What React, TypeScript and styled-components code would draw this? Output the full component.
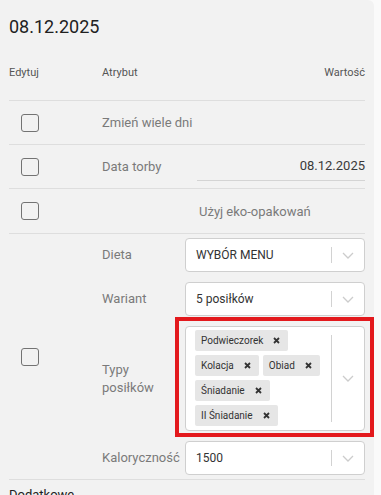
import React, { FC } from 'react';
import styled, { createGlobalStyle } from 'styled-components';

const GlobalStyle = createGlobalStyle`
  body {
    margin: 0;
    background: #fafafa;
    font-family: Roboto, 'Liberation Sans', sans-serif;
  }
`;

const Panel = styled.div`
  width: 374px;
  min-height: 495px;
  box-sizing: border-box;
  padding: 15px 9px 0;
  background: #f2f2f2;
  border-top-right-radius: 6px;
`;

const Title = styled.h2`
  margin: 0;
  font-size: 18px;
  line-height: 24px;
  font-weight: 400;
  color: #212121;
`;

const HeaderRow = styled.div`
  display: grid;
  grid-template-columns: 93px 1fr auto;
  margin-top: 27px;
  padding-bottom: 20px;
  border-bottom: 1px solid #dedede;
  font-size: 11px;
  line-height: 14px;
  color: #555;
`;

const Row = styled.div<{ $height?: number }>`
  display: grid;
  grid-template-columns: 93px 83px 1fr;
  align-items: center;
  min-height: ${p => p.$height ?? 43}px;
  border-bottom: 1px solid #dedede;
`;

const CheckCell = styled.div`
  grid-column: 1;
  padding-left: 12px;
  display: flex;
  align-items: center;
`;

const Checkbox = styled.span`
  display: block;
  width: 18px;
  height: 18px;
  box-sizing: border-box;
  border: 1.5px solid #737373;
  border-radius: 3px;
`;

const Label = styled.div<{ $wide?: boolean }>`
  grid-column: ${p => (p.$wide ? '2 / 4' : '2')};
  font-size: 13px;
  line-height: 18px;
  color: #7a7a7a;
`;

const DateInput = styled.div`
  grid-column: 3;
  margin-left: 12px;
  height: 28px;
  line-height: 28px;
  text-align: right;
  font-size: 13px;
  color: #3a3a3a;
  border-bottom: 1px solid #d4d4d4;
`;

const OptionText = styled.div`
  grid-column: 3;
  padding-left: 14px;
  font-size: 13px;
  color: #7a7a7a;
`;

const Fields = styled.div`
  grid-column: 2 / 4;
  display: grid;
  grid-template-columns: 83px 1fr;
  align-items: center;
  row-gap: 10px;
  padding: 4px 0;
`;

const FieldLabel = styled.div`
  padding-right: 10px;
  font-size: 13px;
  line-height: 18px;
  color: #7a7a7a;
`;

const SelectBox = styled.div<{ $highlight?: boolean }>`
  position: relative;
  display: flex;
  align-items: stretch;
  min-height: 34px;
  box-sizing: border-box;
  background: #fff;
  border: 1px solid #cfcfcf;
  border-radius: 4px;

  &::after {
    content: '';
    display: ${p => (p.$highlight ? 'block' : 'none')};
    position: absolute;
    top: -10px;
    right: -10px;
    bottom: -7px;
    left: -11px;
    border: 4px solid #e3191d;
    pointer-events: none;
  }
`;

const SelectValue = styled.div`
  flex: 1;
  display: flex;
  align-items: center;
  padding-left: 10px;
  font-size: 12px;
  color: #333;
`;

const TagList = styled.div`
  flex: 1;
  display: flex;
  flex-wrap: wrap;
  align-content: flex-start;
  gap: 4px;
  padding: 3px 4px 4px 9px;
`;

const Tag = styled.span`
  display: inline-flex;
  align-items: center;
  height: 21px;
  background: #e6e6e6;
  border-radius: 2px;
  font-size: 10px;
  color: #333;
  padding-left: 6px;
`;

const TagRemove = styled.span`
  display: flex;
  align-items: center;
  padding: 0 8px 0 10px;
`;

const Separator = styled.span`
  width: 1px;
  margin: 8px 0;
  background: #d2d2d2;
`;

const Indicator = styled.span`
  width: 32px;
  display: flex;
  align-items: center;
  justify-content: center;
`;

const SectionTitle = styled.div`
  margin-top: 7px;
  font-size: 13px;
  color: #222;
`;

const Chevron: FC = () => (
  <svg width="12" height="7" viewBox="0 0 12 7">
    <path d="M1 1l5 5 5-5" fill="none" stroke="#cccccc" strokeWidth="1.3" />
  </svg>
);

const Cross: FC = () => (
  <svg width="7" height="7" viewBox="0 0 7 7">
    <path d="M1 1l5 5M6 1L1 6" stroke="#333" strokeWidth="1.8" />
  </svg>
);

const Select: FC<{ value: string }> = ({ value }) => (
  <SelectBox>
    <SelectValue>{value}</SelectValue>
    <Separator />
    <Indicator>
      <Chevron />
    </Indicator>
  </SelectBox>
);

const meals = ['Podwieczorek', 'Kolacja', 'Obiad', 'Śniadanie', 'II Śniadanie'];

const App: FC = () => (
  <>
    <GlobalStyle />
    <Panel>
      <Title>08.12.2025</Title>
      <HeaderRow>
        <span>Edytuj</span>
        <span>Atrybut</span>
        <span>Wartość</span>
      </HeaderRow>
      <Row>
        <CheckCell>
          <Checkbox />
        </CheckCell>
        <Label $wide>Zmień wiele dni</Label>
      </Row>
      <Row>
        <CheckCell>
          <Checkbox />
        </CheckCell>
        <Label>Data torby</Label>
        <DateInput>08.12.2025</DateInput>
      </Row>
      <Row $height={44}>
        <CheckCell>
          <Checkbox />
        </CheckCell>
        <OptionText>Użyj eko-opakowań</OptionText>
      </Row>
      <Row>
        <CheckCell>
          <Checkbox />
        </CheckCell>
        <Fields>
          <FieldLabel>Dieta</FieldLabel>
          <Select value="WYBÓR MENU" />
          <FieldLabel>Wariant</FieldLabel>
          <Select value="5 posiłków" />
          <FieldLabel>Typy posiłków</FieldLabel>
          <SelectBox $highlight>
            <TagList>
              {meals.map(meal => (
                <Tag key={meal}>
                  {meal}
                  <TagRemove>
                    <Cross />
                  </TagRemove>
                </Tag>
              ))}
            </TagList>
            <Separator />
            <Indicator>
              <Chevron />
            </Indicator>
          </SelectBox>
          <FieldLabel>Kaloryczność</FieldLabel>
          <Select value="1500" />
        </Fields>
      </Row>
      <SectionTitle>Dodatkowe</SectionTitle>
    </Panel>
  </>
);

export default App;
